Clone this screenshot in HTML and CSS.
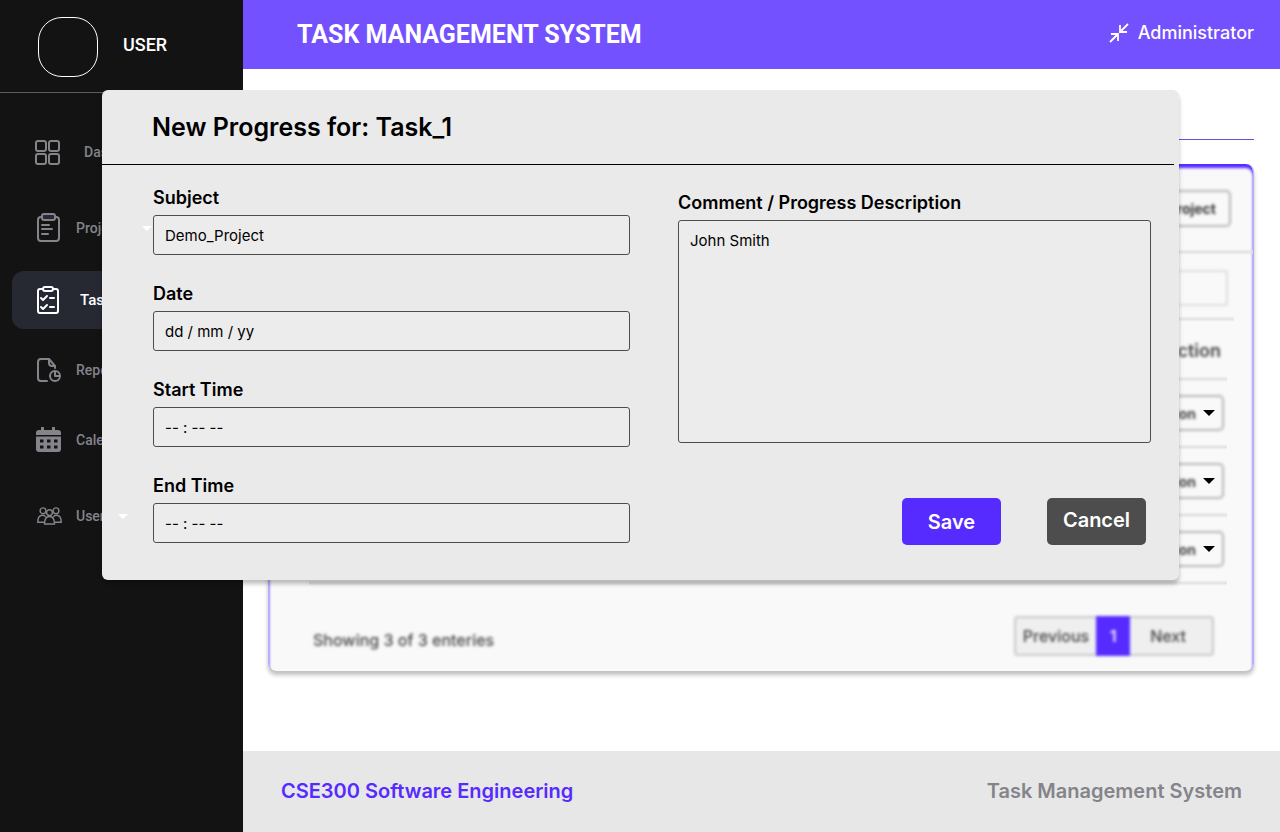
FILE: index.html
```html
<!DOCTYPE html>
<html lang="en">
<head>
<meta charset="utf-8">
<meta name="viewport" content="width=device-width, initial-scale=1">
<title>Task Management System</title>
<link rel="stylesheet" href="styles.css">
</head>
<body>
<div class="app">
  <aside class="sidebar">
    <div class="profile">
      <span class="avatar"></span>
      <span class="profile-name">USER</span>
    </div>
    <nav class="nav">
      <a class="nav-item nav-item--home" href="#">
        <svg class="nav-icon" width="26" height="26" viewBox="0 -1 26 26" fill="none" stroke="currentColor" stroke-width="2"><rect x="1" y="1" width="10" height="10" rx="2"/><rect x="14" y="1" width="10" height="10" rx="2"/><rect x="1" y="14" width="10" height="10" rx="2"/><rect x="14" y="14" width="10" height="10" rx="2"/></svg>
        <span>Dashboard</span>
      </a>
      <a class="nav-item nav-item--group" href="#">
        <svg class="nav-icon" width="26" height="30" viewBox="0 0 26 30" fill="none" stroke="currentColor" stroke-width="2" stroke-linecap="round"><path d="M6 4H5a3 3 0 0 0-3 3v18a3 3 0 0 0 3 3h15a3 3 0 0 0 3-3V7a3 3 0 0 0-3-3h-1"/><rect x="6" y="1" width="13" height="6" rx="2" fill="#262a33"/><path d="M6 12h7M6 16h10M6 21h6"/></svg>
        <span>Projects</span>
        <svg class="nav-caret" width="10" height="5" viewBox="0 0 10 5"><path d="M0 0h10L5 5z" fill="#fff"/></svg>
      </a>
      <a class="nav-item nav-item--active" href="#" aria-current="page">
        <svg class="nav-icon" width="26" height="30" viewBox="0 0 26 30" fill="none" stroke="currentColor" stroke-width="2" stroke-linecap="round" stroke-linejoin="round"><path d="M7 4H4a2 2 0 0 0-2 2v20a2 2 0 0 0 2 2h16a2 2 0 0 0 2-2V6a2 2 0 0 0-2-2h-3"/><rect x="7" y="2" width="10" height="4" rx="2"/><path d="m5 13 2 2 4-4M14 13h4M5 22l2 2 4-4M14 22h4"/></svg>
        <span>Task</span>
      </a>
      <a class="nav-item" href="#">
        <svg class="nav-icon" width="26" height="26" viewBox="0 -1 26 26" fill="none" stroke="currentColor" stroke-width="2" stroke-linecap="round" stroke-linejoin="round"><path d="M11 23H5a3 3 0 0 1-3-3V4a3 3 0 0 1 3-3h8l6 7v2M13 1v4a3 3 0 0 0 3 3h3"/><circle cx="19" cy="18" r="5"/><path d="M19 14v4h4"/></svg>
        <span>Reports</span>
      </a>
      <a class="nav-item" href="#">
        <svg class="nav-icon" width="26" height="26" viewBox="1 0 26 26" fill="currentColor"><path d="M1 8V6a3 3 0 0 1 3-3h2V1a1 1 0 0 1 3 0v2h8V1a1 1 0 0 1 3 0v2h3a3 3 0 0 1 3 3v2z"/><path fill-rule="evenodd" d="M1 9.500h25V22a3 3 0 0 1-3 3H4a3 3 0 0 1-3-3zM5 12.500v3h3.500v-3zm7 0v3h3.500v-3zm7 0v3h3.500v-3zm-14 6v3h3.500v-3zm7 0v3h3.500v-3zm7 0v3h3.500v-3z"/></svg>
        <span>Calendar</span>
      </a>
      <a class="nav-item nav-item--group nav-item--compact" href="#">
        <svg class="nav-icon" width="26" height="18" viewBox="0 -1 26 18" fill="none" stroke="currentColor" stroke-width="1.400"><circle cx="7" cy="2.800" r="2.900"/><circle cx="20" cy="2.800" r="2.900"/><circle cx="13.500" cy="4.600" r="2.900"/><path d="M8.500 16c0-4.500 1.500-7.500 5-7.500s5 3 5 7.500zM8.500 14.200H1.800c0-4.500 1.500-7 4.500-7 1.600 0 2.700.6 3.500 1.700M18.500 14.200h6.700c0-4.500-1.500-7-4.500-7-1.600 0-2.700.6-3.500 1.700"/></svg>
        <span>Users</span>
        <svg class="nav-caret" width="10" height="5" viewBox="0 0 10 5"><path d="M0 0h10L5 5z" fill="#fff"/></svg>
      </a>
    </nav>
  </aside>

  <div class="page">
    <header class="topbar">
      <h1 class="brand">TASK MANAGEMENT SYSTEM</h1>
      <a class="account" href="#">
        <svg width="20" height="20" viewBox="0 0 20 20" fill="none" stroke="currentColor" stroke-width="1.800"><path d="M19 1l-7.500 7.500M11 2v7h7M1 19l7.500-7.500M2 11h7v7"/></svg>
        <span>Administrator</span>
      </a>
    </header>

    <main class="content">
      <hr class="rule">
      <section class="card">
        <div class="card-head">
          <button class="outline-btn soft" type="button">Add Project</button>
        </div>
        <div class="card-search">
          <input class="search soft" type="search" aria-label="Search">
        </div>
        <table class="tasks">
          <thead><tr><th><span class="soft">Action</span></th></tr></thead>
          <tbody>
            <tr><td><button class="action-btn" type="button"><span class="soft">Action</span><svg width="12" height="6" viewBox="0 0 12 6"><path d="M0 0h12L6 6z"/></svg></button></td></tr>
            <tr><td><button class="action-btn" type="button"><span class="soft">Action</span><svg width="12" height="6" viewBox="0 0 12 6"><path d="M0 0h12L6 6z"/></svg></button></td></tr>
            <tr><td><button class="action-btn" type="button"><span class="soft">Action</span><svg width="12" height="6" viewBox="0 0 12 6"><path d="M0 0h12L6 6z"/></svg></button></td></tr>
          </tbody>
        </table>
        <div class="card-foot">
          <span class="showing soft">Showing 3 of 3 enteries</span>
          <div class="pager soft">
            <button class="pager-btn" type="button">Previous</button>
            <button class="pager-btn pager-btn--current" type="button">1</button>
            <button class="pager-btn pager-btn--next" type="button">Next</button>
          </div>
        </div>
      </section>
    </main>

    <footer class="footer">
      <span class="footer-course">CSE300 Software Engineering</span>
      <span>Task Management System</span>
    </footer>
  </div>

  <form class="modal" role="dialog" aria-labelledby="modal-title">
    <div class="modal-head"><h2 class="modal-title" id="modal-title">New Progress for: Task_1</h2></div>
    <div class="modal-body">
      <div class="fields">
        <div class="field"><label for="subject">Subject</label><input class="control" id="subject" type="text" value="Demo_Project"></div>
        <div class="field"><label for="date">Date</label><input class="control" id="date" type="text" placeholder="dd / mm / yy"></div>
        <div class="field"><label for="start">Start Time</label><input class="control" id="start" type="text" placeholder="-- : -- --"></div>
        <div class="field"><label for="end">End Time</label><input class="control" id="end" type="text" placeholder="-- : -- --"></div>
      </div>
      <div class="details">
        <div class="field"><label for="comment">Comment / Progress Description</label><textarea class="control control--area" id="comment">John Smith</textarea></div>
        <div class="actions">
          <button class="btn btn--save" type="submit">Save</button>
          <button class="btn btn--cancel" type="button">Cancel</button>
        </div>
      </div>
    </div>
  </form>
</div>
</body>
</html>
```
FILE: styles.css
```css
* { box-sizing: border-box; }

body {
  margin: 0;
  font-family: Inter, "Liberation Sans", sans-serif;
  color: #000;
  background: #fff;
}

button, input, textarea { font: inherit; color: inherit; }
a { color: inherit; text-decoration: none; }

.app {
  position: relative;
  display: grid;
  grid-template-columns: 243px 1fr;
  min-height: 100vh;
}

/* Sidebar */
.sidebar {
  background: #131313;
  font-family: Roboto, "Liberation Sans", sans-serif;
  font-weight: 500;
}

.profile {
  display: flex;
  align-items: center;
  gap: 25px;
  height: 93px;
  padding: 2px 0 0 38px;
  border-bottom: 1px solid #5c5c5c;
  color: #fff;
  font-size: 18px;
}

.profile-name { padding-bottom: 5px; }

.avatar {
  width: 60px;
  height: 60px;
  border: 1px solid #fff;
  border-radius: 24px;
}

.nav {
  display: flex;
  flex-direction: column;
  gap: 12px;
  padding: 30px 12px 0;
  color: #84848a;
  font-size: 14px;
}

.nav-item {
  display: flex;
  align-items: center;
  gap: 14px;
  height: 58px;
  padding-left: 24px;
}

.nav-item--home {
  gap: 23px;
  padding-left: 23px;
}

.nav-item--group { margin-top: 6px; }

.nav-item--active {
  gap: 18px;
  margin-top: 2px;
  border-radius: 12px;
  background: #262931;
  color: #fff;
  font-size: 15px;
}

.nav-caret {
  position: relative;
  z-index: 3;
}

.nav-item--compact .nav-caret { margin-left: -8px; }

/* Page frame */
.page {
  display: flex;
  flex-direction: column;
}

.topbar {
  display: flex;
  align-items: center;
  justify-content: space-between;
  height: 69px;
  padding: 0 26px 0 54px;
  background: #7451ff;
  color: #fff;
}

.brand {
  margin: 0;
  font: 700 25px Roboto, "Liberation Sans", sans-serif;
}

.account {
  display: flex;
  align-items: center;
  gap: 9px;
  padding-bottom: 4px;
  font-size: 18px;
  font-weight: 500;
}

.content {
  flex: 1;
  padding: 70px 26px 0 25px;
}

.rule {
  height: 1px;
  margin: 0 0 24px;
  border: 0;
  background: #6b4cde;
}

.footer {
  display: flex;
  align-items: center;
  justify-content: space-between;
  height: 81px;
  padding: 0 38px 2px;
  background: #e7e7e7;
  color: #84848a;
  font-size: 20px;
  font-weight: 600;
}

.footer-course { color: #562bff; }

/* Background card */
.card {
  border: solid #b8a9ff;
  border-width: 0 1px;
  border-radius: 8px;
  background: #f9f9f9;
  box-shadow: inset 0 4px 3px #562bff, 0 4px 4px rgba(0, 0, 0, 0.25);
}

/* Contents behind the dialog are out of focus */
.soft { filter: blur(0.1em); }

.card-head, .card-search, .tasks th, .tasks td {
  background: linear-gradient(transparent, #e2e2e2, transparent) no-repeat bottom / 100% 6px;
}

.card-head {
  display: flex;
  justify-content: flex-end;
  padding: 26px 22px 28px;
}

.outline-btn {
  height: 37px;
  padding: 0 13px;
  border: 2px solid #b4b4b4;
  border-radius: 5px;
  background: #f9f9f9;
  color: #333;
  font-size: 14px;
  font-weight: 700;
}

.card-search {
  display: flex;
  justify-content: flex-end;
  margin: 0 19px 0 40px;
  padding: 15px 6px 16px;
}

.search {
  width: 220px;
  height: 36px;
  border: 2px solid #dcdcdc;
  border-radius: 4px;
  background: #f9f9f9;
}

.tasks {
  width: calc(100% - 66px);
  margin: 0 26px 0 40px;
  border-collapse: collapse;
}

.tasks th {
  height: 60px;
  padding: 0 6px 3px;
  color: #444;
  font-size: 18px;
  font-weight: 600;
  text-align: right;
}

.tasks th .soft { display: inline-block; }

.tasks td {
  height: 68px;
  padding: 0 3px 6px;
  text-align: right;
}

.action-btn {
  position: relative;
  display: inline-flex;
  align-items: center;
  gap: 7px;
  height: 36px;
  padding: 0 9px;
  border: 0;
  background: none;
  font-size: 14px;
  font-weight: 700;
  vertical-align: middle;
}

.action-btn::before {
  content: "";
  position: absolute;
  inset: 0;
  border: 2px solid #b4b4b4;
  border-radius: 5px;
  filter: blur(0.1em);
}

.action-btn .soft { color: #444; }

.card-foot {
  display: flex;
  align-items: center;
  justify-content: space-between;
  padding: 30px 39px 15px 44px;
  color: #444;
  font-size: 16px;
  font-weight: 500;
}

.showing { padding-top: 7px; }

.pager {
  display: flex;
  height: 40px;
  border: 2px solid #c8c8c8;
  border-radius: 4px;
  background: #efefef;
}

.pager-btn {
  padding: 0 7px;
  border: 0;
  background: none;
}

.pager-btn--current {
  width: 34px;
  margin: -2px 0;
  background: #562bff;
  color: #fff;
}

.pager-btn--next { padding: 0 26px 0 20px; }

/* Dialog */
.modal {
  position: absolute;
  top: 90px;
  left: 102px;
  right: 101px;
  z-index: 2;
  padding-bottom: 35px;
  border-radius: 6px;
  background: #eaeaea;
  box-shadow: 0 4px 4px rgba(0, 0, 0, 0.25);
}

.modal-head {
  display: flex;
  align-items: center;
  height: 75px;
  margin-right: 5px;
  padding-left: 50px;
  border-bottom: 1px solid #000;
}

.modal-title {
  margin: 0;
  font-size: 25px;
  font-weight: 600;
}

.modal-body {
  display: grid;
  grid-template-columns: 477fr 473fr;
  gap: 48px;
  padding: 21px 28px 0 51px;
}

.fields {
  display: flex;
  flex-direction: column;
  gap: 27px;
}

.field {
  display: flex;
  flex-direction: column;
  gap: 5px;
  font-size: 18px;
  font-weight: 600;
  line-height: 24px;
}

.control {
  width: 100%;
  height: 40px;
  padding: 0 11px;
  border: 1px solid #4d4d4d;
  border-radius: 3px;
  background: #ececec;
  font-size: 15px;
  font-weight: 400;
}

.control::placeholder { color: #000; opacity: 1; }

.control--area {
  height: 223px;
  padding: 8px 11px;
  resize: none;
}

.details { padding-top: 5px; }

.actions {
  display: flex;
  justify-content: flex-end;
  gap: 46px;
  padding: 55px 5px 0 0;
}

.btn {
  width: 99px;
  height: 47px;
  padding: 0;
  border: 0;
  border-radius: 5px;
  color: #fff;
  font-size: 20px;
  font-weight: 600;
}

.btn--save { background: #562bff; }

.btn--cancel {
  padding-bottom: 3px;
  background: #4d4d4d;
}
```
